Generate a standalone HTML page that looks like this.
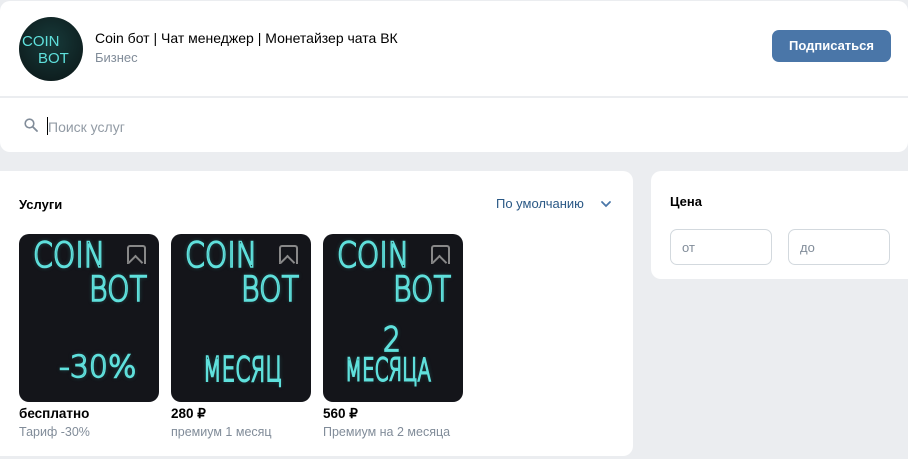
<!DOCTYPE html>
<html><head><meta charset="utf-8"><style>
body{margin:0;width:908px;height:459px;background:#ebedf0;font-family:"Liberation Sans",Arial,sans-serif;position:relative;overflow:hidden}
.card{position:absolute;background:#fff;border-radius:10px}
.t{position:absolute;white-space:nowrap}
.img{position:absolute;top:234px;width:140px;height:168px;background:#14151a;border-radius:10px;overflow:hidden}
.neon{position:absolute;color:transparent;-webkit-text-stroke:1.4px #5fe0dc;font-family:"DejaVu Sans",sans-serif;font-weight:300;text-shadow:0 0 4px rgba(64,220,215,.5);letter-spacing:0;transform-origin:0 0}
.bm{position:absolute;left:108px;top:11px;width:15px;height:17px;border:2px solid #888;border-bottom:none;border-radius:3px 3px 0 0}
.bm:after{content:"";position:absolute;left:1px;bottom:-4px;width:9px;height:9px;border-left:2px solid #888;border-top:2px solid #888;transform:rotate(45deg);background:#14151a}
.pr{position:absolute;top:406px;font-weight:bold;font-size:13.5px;color:#000}
.sb{position:absolute;top:425px;font-size:12.5px;color:#818c99}
</style></head><body>
<div class="card" style="left:0;top:1px;width:908px;height:95px;border-radius:10px 10px 0 0"></div>
<div style="position:absolute;left:19px;top:17px;width:64px;height:64px;border-radius:50%;background:radial-gradient(circle at 50% 40%,#173a3a,#0b1516)"></div>
<div class="t" style="left:22px;top:33px;font-size:15px;color:#5fe0dc">COIN</div>
<div class="t" style="left:38px;top:50px;font-size:15px;color:#5fe0dc">BOT</div>
<div class="t" style="left:95px;top:30px;font-size:14px;color:#000">Coin бот | Чат менеджер | Монетайзер чата ВК</div>
<div class="t" style="left:95px;top:50px;font-size:13px;color:#818c99">Бизнес</div>
<div style="position:absolute;left:772px;top:30px;width:119px;height:32px;background:#4a76a8;border-radius:7px;color:#fff;font-weight:bold;font-size:13px;text-align:center;line-height:32px">Подписаться</div>
<div class="card" style="left:0;top:98px;width:908px;height:54px;border-radius:0 0 10px 10px"></div>
<svg style="position:absolute;left:24px;top:118px" width="14" height="14" viewBox="0 0 14 14"><circle cx="5.5" cy="5.5" r="4.3" fill="none" stroke="#818c99" stroke-width="1.6"/><path d="M8.7 8.7L13 13" stroke="#818c99" stroke-width="1.8" stroke-linecap="round"/></svg>
<div style="position:absolute;left:47px;top:117px;width:1px;height:18px;background:#000"></div>
<div class="t" style="left:48px;top:119px;font-size:14px;color:#929ba5">Поиск услуг</div>
<div class="card" style="left:0;top:171px;width:633px;height:285px;border-radius:0 10px 10px 0"></div>
<div class="t" style="left:19px;top:197px;font-size:13px;font-weight:bold;color:#000">Услуги</div>
<div class="t" style="left:496px;top:196px;font-size:13px;color:#2a5885">По умолчанию</div>
<svg style="position:absolute;left:600px;top:200px" width="12" height="8" viewBox="0 0 12 8"><path d="M2 2l4 4 4-4" fill="none" stroke="#4a76a8" stroke-width="1.8" stroke-linecap="round"/></svg>
<div class="img" style="left:19px"><div class="neon" style="left:14px;top:2px;font-size:30px;transform:scale(0.95,1.15)">COIN</div><div class="neon" style="left:70px;top:36px;font-size:30px;transform:scale(0.95,1.15)">BOT</div><div class="neon" style="left:40px;top:116px;font-size:30px">-30%</div><div class="bm"></div></div>
<div class="img" style="left:171px"><div class="neon" style="left:14px;top:2px;font-size:30px;transform:scale(0.95,1.15)">COIN</div><div class="neon" style="left:70px;top:36px;font-size:30px;transform:scale(0.95,1.15)">BOT</div><div class="neon" style="left:32px;top:116px;font-size:24px;transform:scale(0.9,1.4)">МЕСЯЦ</div><div class="bm"></div></div>
<div class="img" style="left:323px"><div class="neon" style="left:14px;top:2px;font-size:30px;transform:scale(0.95,1.15)">COIN</div><div class="neon" style="left:70px;top:36px;font-size:30px;transform:scale(0.95,1.15)">BOT</div><div class="neon" style="left:60px;top:86px;font-size:28px;transform:scaleY(1.2)">2</div><div class="neon" style="left:22px;top:120px;font-size:22px;transform:scale(0.9,1.4)">МЕСЯЦА</div><div class="bm"></div></div>
<div class="pr" style="left:19px">бесплатно</div><div class="sb" style="left:19px">Тариф -30%</div>
<div class="pr" style="left:171px">280 ₽</div><div class="sb" style="left:171px">премиум 1 месяц</div>
<div class="pr" style="left:323px">560 ₽</div><div class="sb" style="left:323px">Премиум на 2 месяца</div>
<div class="card" style="left:651px;top:171px;width:257px;height:108px;border-radius:10px 0 0 10px"></div>
<div class="t" style="left:670px;top:194px;font-size:13px;font-weight:bold;color:#000">Цена</div>
<div style="position:absolute;left:670px;top:229px;width:102px;height:36px;border:1px solid #d3d9de;border-radius:7px;box-sizing:border-box"></div>
<div class="t" style="left:682px;top:240px;font-size:13px;color:#818c99">от</div>
<div style="position:absolute;left:788px;top:229px;width:102px;height:36px;border:1px solid #d3d9de;border-radius:7px;box-sizing:border-box"></div>
<div class="t" style="left:800px;top:240px;font-size:13px;color:#818c99">до</div>
</body></html>
